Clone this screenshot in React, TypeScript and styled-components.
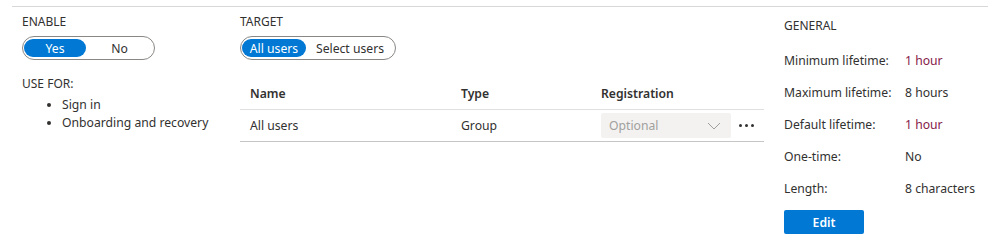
import styled, { createGlobalStyle } from "styled-components"

const GlobalStyle = createGlobalStyle`
    body {
        margin: 0;
        background: #ffffff;
        font-family: "Segoe UI", "Noto Sans", sans-serif;
        color: #323130;
    }
`

const Page = styled.div`
    margin: 6px 1px 0 12px;
    border-top: 1px solid #d8d8d8;
    display: grid;
    grid-template-columns: 218px 524px 1fr;
    padding-left: 10px;
`

const Column = styled.div`
    display: flex;
    flex-direction: column;
`

const Label = styled.div`
    font-size: 12px;
    line-height: 16px;
    margin-top: 7px;
    text-transform: uppercase;
`

const Pill = styled.div`
    display: inline-flex;
    align-self: flex-start;
    align-items: center;
    margin-top: 6px;
    padding: 1px;
    height: 20px;
    border: 1px solid #8a8886;
    border-radius: 12px;
`

const PillOption = styled.div<{ $active?: boolean; $width: number }>`
    width: ${(p) => p.$width}px;
    height: 18px;
    border-radius: 10px;
    display: flex;
    align-items: center;
    justify-content: center;
    font-size: 12.2px;
    background: ${(p) => (p.$active ? "#0078d4" : "transparent")};
    color: ${(p) => (p.$active ? "#ffffff" : "#323130")};
`

const UseFor = styled(Label)`
    margin-top: 16px;
`

const Bullets = styled.ul`
    margin: 4px 0 0;
    padding-left: 40px;
    font-size: 12.2px;
    line-height: 18px;
`

const Table = styled.div`
    margin-top: 17px;
    display: flex;
    flex-direction: column;
`

const Row = styled.div<{ $head?: boolean }>`
    display: grid;
    grid-template-columns: 211px 140px 1fr;
    align-items: center;
    height: ${(p) => (p.$head ? 32 : 31)}px;
    padding-left: 10px;
    border-bottom: 1px solid ${(p) => (p.$head ? "#e1dfdd" : "#c8c6c4")};
    font-size: 12.2px;
    font-weight: ${(p) => (p.$head ? 600 : 400)};
`

const Cell = styled.div`
    display: flex;
    align-items: center;
    gap: 8px;
`

const Select = styled.div`
    width: 130px;
    height: 25px;
    box-sizing: border-box;
    background: #f3f2f1;
    border-radius: 2px;
    display: flex;
    align-items: center;
    justify-content: space-between;
    padding: 0 10px 0 8px;
    color: #a19f9d;
`

const More = styled.div`
    display: flex;
    gap: 3px;
    span {
        width: 3px;
        height: 3px;
        border-radius: 50%;
        background: #323130;
    }
`

const General = styled(Column)`
    padding-left: 20px;
`

const GeneralTitle = styled(Label)`
    margin-top: 11px;
    margin-bottom: 10px;
`

const Prop = styled.div`
    display: grid;
    grid-template-columns: 121px 1fr;
    height: 32px;
    align-items: center;
    font-size: 12.2px;
`

const Value = styled.span<{ $accent?: boolean }>`
    color: ${(p) => (p.$accent ? "#86204a" : "#323130")};
`

const EditButton = styled.button`
    margin-top: 6px;
    align-self: flex-start;
    width: 80px;
    height: 24px;
    border: none;
    border-radius: 2px;
    background: #0078d4;
    color: #ffffff;
    font-family: inherit;
    font-size: 12.2px;
    font-weight: 600;
`

const Chevron = () => (
    <svg width="14" height="8" viewBox="0 0 14 8" fill="none">
        <path d="M1 1l6 6 6-6" stroke="#a19f9d" strokeWidth="1" />
    </svg>
)

const props = [
    { name: "Minimum lifetime:", value: "1 hour", accent: true },
    { name: "Maximum lifetime:", value: "8 hours" },
    { name: "Default lifetime:", value: "1 hour", accent: true },
    { name: "One-time:", value: "No" },
    { name: "Length:", value: "8 characters" },
]

export default function App() {
    return (
        <>
            <GlobalStyle />
            <Page>
                <Column>
                    <Label>Enable</Label>
                    <Pill>
                        <PillOption $active $width={62}>Yes</PillOption>
                        <PillOption $width={67}>No</PillOption>
                    </Pill>
                    <UseFor>Use for:</UseFor>
                    <Bullets>
                        <li>Sign in</li>
                        <li>Onboarding and recovery</li>
                    </Bullets>
                </Column>
                <Column>
                    <Label>Target</Label>
                    <Pill>
                        <PillOption $active $width={64}>All users</PillOption>
                        <PillOption $width={88}>Select users</PillOption>
                    </Pill>
                    <Table>
                        <Row $head>
                            <Cell>Name</Cell>
                            <Cell>Type</Cell>
                            <Cell>Registration</Cell>
                        </Row>
                        <Row>
                            <Cell>All users</Cell>
                            <Cell>Group</Cell>
                            <Cell>
                                <Select>
                                    Optional
                                    <Chevron />
                                </Select>
                                <More>
                                    <span />
                                    <span />
                                    <span />
                                </More>
                            </Cell>
                        </Row>
                    </Table>
                </Column>
                <General>
                    <GeneralTitle>General</GeneralTitle>
                    {props.map((p) => (
                        <Prop key={p.name}>
                            <span>{p.name}</span>
                            <Value $accent={p.accent}>{p.value}</Value>
                        </Prop>
                    ))}
                    <EditButton>Edit</EditButton>
                </General>
            </Page>
        </>
    )
}
